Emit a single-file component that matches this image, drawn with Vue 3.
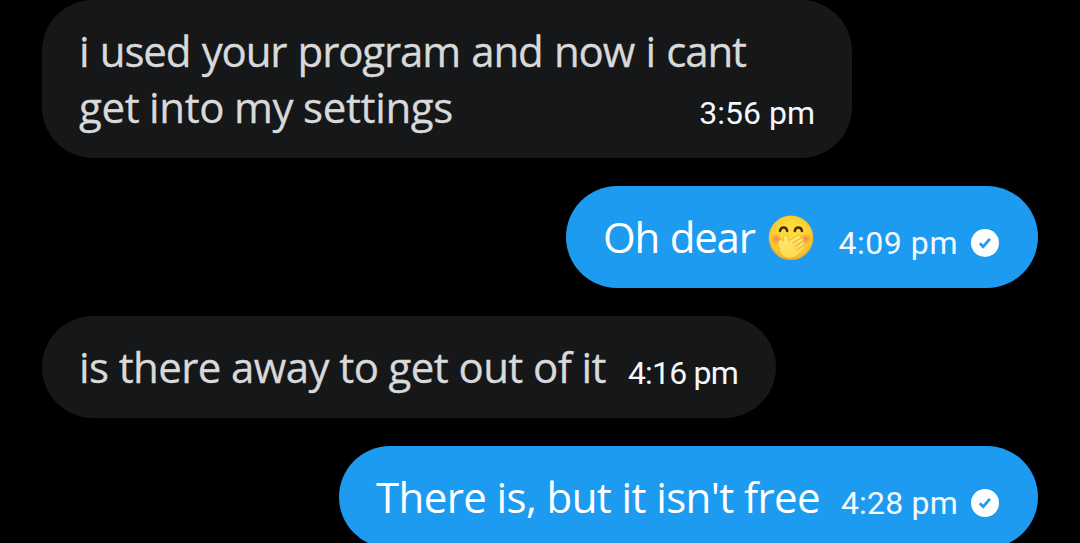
<template>
  <div class="chat">
    <div
      v-for="msg in messages"
      :key="msg.id"
      class="bubble"
      :class="[msg.mine ? 'mine' : 'theirs', 'bubble-' + msg.id]"
    >
      <div class="text">
        <div v-for="(line, i) in msg.lines" :key="i" class="line" :class="'line-' + msg.id + '-' + i">{{ line }}</div>
      </div>
      <svg v-if="msg.emoji" class="emoji" viewBox="0 0 46 46">
        <defs>
          <radialGradient id="face" cx="50%" cy="45%" r="55%">
            <stop offset="0.5" stop-color="#fddc3a" />
            <stop offset="0.82" stop-color="#fbc92f" />
            <stop offset="1" stop-color="#eea62b" />
          </radialGradient>
          <radialGradient id="cheek">
            <stop offset="0.1" stop-color="#f5774c" stop-opacity="0.8" />
            <stop offset="1" stop-color="#f5774c" stop-opacity="0" />
          </radialGradient>
          <linearGradient id="hand" x1="0" y1="0" x2="0.4" y2="1">
            <stop offset="0" stop-color="#ffe873" />
            <stop offset="1" stop-color="#fddc55" />
          </linearGradient>
        </defs>
        <circle cx="23" cy="22.8" r="22.3" fill="url(#face)" />
        <circle cx="8.5" cy="24" r="6" fill="url(#cheek)" />
        <circle cx="37.5" cy="24" r="6" fill="url(#cheek)" />
        <g fill="none" stroke="#422b0d" stroke-width="2.5" stroke-linecap="round">
          <path d="M12 16C13 11.4 18.3 11.4 19.2 16" />
          <path d="M26.8 16C27.7 11.4 33 11.4 34 16" />
        </g>
        <path
          d="M10.3 31C9.5 27.5 10.3 24 13.8 24.8L15.5 25.7C15.1 22.5 16 19.5 18.3 20C20.5 20.5 20 22.8 20.8 25.7L30.2 20.3C32.8 19 34.3 21.7 32.4 23.3C35 22.3 36.4 25 34.5 26.7C36.7 26.3 37.5 28.9 35.7 30.3C37.5 30.5 37.4 32.8 35.8 34L29.6 40.2C24 45 15.4 43.8 12.2 37.7Z"
          fill="url(#hand)"
          stroke="#eba52b"
          stroke-width="0.7"
          stroke-linejoin="round"
        />
        <path
          d="M32.4 23.3L24.7 28.2M34.5 26.7L26.5 31.7M35.7 30.3L28.5 35.1"
          fill="none"
          stroke="#e89f28"
          stroke-width="0.9"
          stroke-linecap="round"
        />
      </svg>
      <div class="time" :class="'time-' + msg.id">{{ msg.time }}</div>
      <svg v-if="msg.mine" class="check" viewBox="0 0 28 28">
        <circle cx="14" cy="14" r="14" fill="#fff" />
        <path d="M8.8 14.2L12.2 17.7L18.9 9.8" fill="none" stroke="#1d9bf0" stroke-width="2.7" />
      </svg>
    </div>
  </div>
</template>

<script setup>
const messages = [
  { id: 1, mine: false, lines: ['i used your program and now i cant', 'get into my settings'], time: '3:56 pm' },
  { id: 2, mine: true, lines: ['Oh dear'], emoji: true, time: '4:09 pm' },
  { id: 3, mine: false, lines: ['is there away to get out of it'], time: '4:16 pm' },
  { id: 4, mine: true, lines: ["There is, but it isn't free"], time: '4:28 pm' },
]
</script>

<style>
body {
  background: #000;
  overflow: hidden;
}
</style>

<style scoped>
.chat {
  box-sizing: border-box;
  height: 543px;
  overflow: hidden;
  padding: 0.4px 42px 0;
  display: flex;
  flex-direction: column;
  gap: 28px;
  background: #000;
  font-family: 'Open Sans', sans-serif;
}

.bubble {
  box-sizing: border-box;
  flex: none;
  display: flex;
  align-items: flex-end;
  padding: 23px 37px;
  border-radius: 51px;
}

.theirs {
  align-self: flex-start;
  background: #151719;
  color: #d9d9d9;
}

.mine {
  align-self: flex-end;
  background: #1d9bf0;
  color: #fff;
  padding-right: 39px;
}

.bubble-1 {
  width: 810px;
}

.bubble-2 {
  width: 472px;
}

.bubble-3 {
  width: 734px;
}

.bubble-4 {
  width: 699px;
}

.line {
  font-size: 42px;
  line-height: 56px;
  letter-spacing: -0.6px;
  white-space: nowrap;
}

.theirs .line {
  -webkit-text-stroke: 0.3px currentColor;
}

.line-1-0 {
  letter-spacing: -1.15px;
  word-spacing: 1.6px;
}

.line-1-1 {
  letter-spacing: -0.35px;
  word-spacing: -0.8px;
}

.line-2-0 {
  letter-spacing: -1.2px;
  word-spacing: 1px;
}

.text {
  width: 0;
}

.emoji {
  width: 46px;
  height: 46px;
  margin: 0 0 4px 165px;
}

.time {
  margin: 0 0 2px auto;
  font-family: Roboto, sans-serif;
  font-size: 32px;
  line-height: 40px;
  white-space: nowrap;
  color: #f5f8fa;
}

.time-2 {
  letter-spacing: 0.55px;
}

.time-3 {
  margin-right: 1px;
  letter-spacing: -0.8px;
}

.time-4 {
  letter-spacing: 0.2px;
}

.check {
  width: 28px;
  height: 28px;
  margin: 0 0 8px 13px;
}
</style>
